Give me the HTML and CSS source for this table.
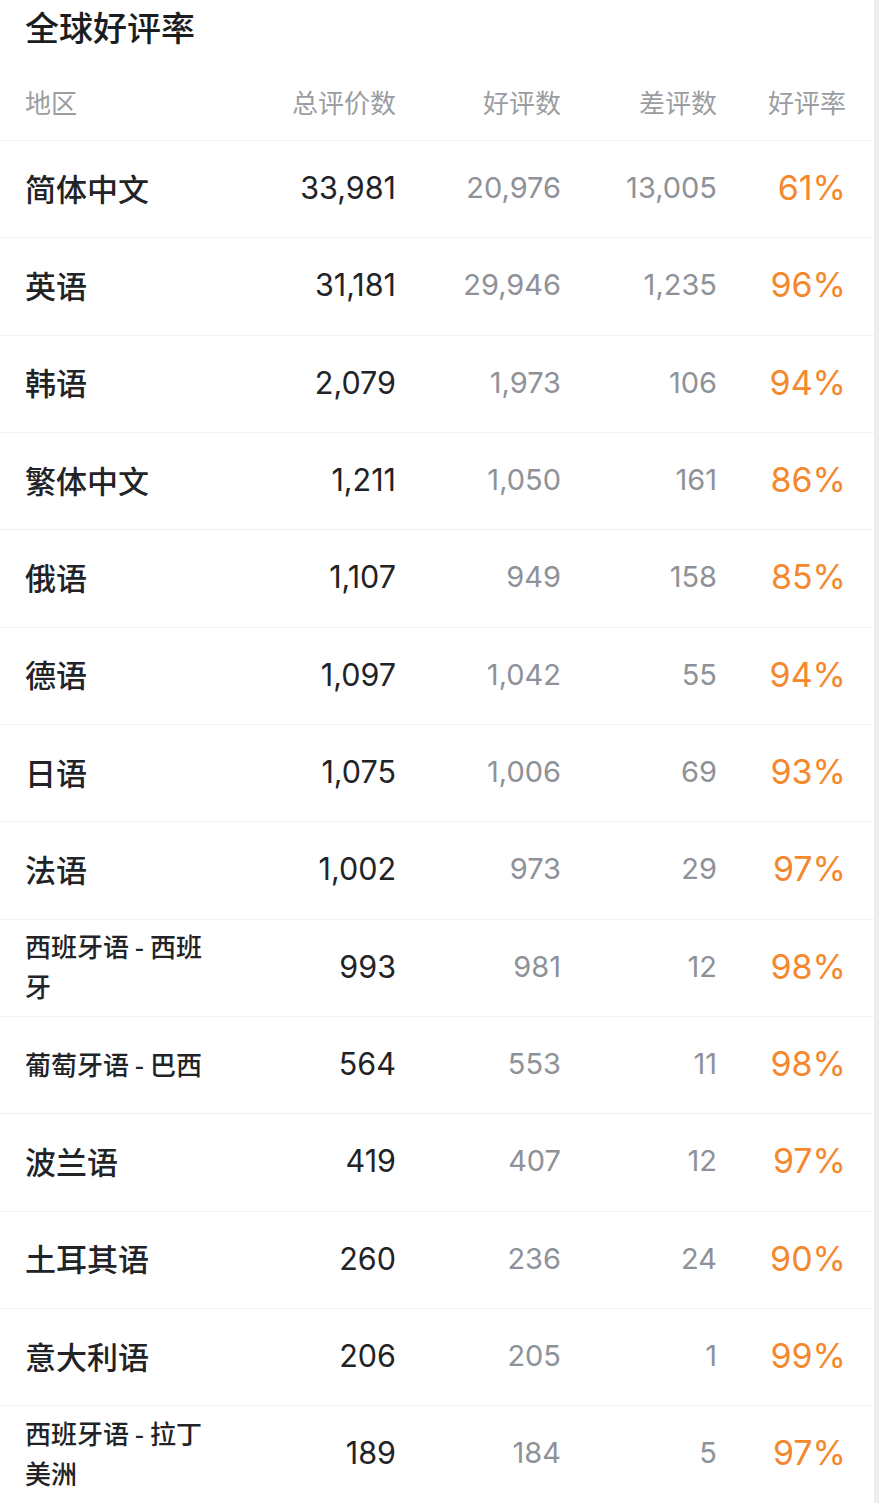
FILE: index.html
```html
<!DOCTYPE html>
<html lang="zh-CN">
<head>
<meta charset="utf-8">
<title>全球好评率</title>
<link rel="stylesheet" href="styles.css">
</head>
<body>
<div class="page">
  <main class="panel">
    <h1 class="title">全球好评率</h1>
    <div class="row head">
      <div class="c-label">地区</div>
      <div class="c-num">总评价数</div>
      <div class="c-num">好评数</div>
      <div class="c-num">差评数</div>
      <div class="c-num">好评率</div>
    </div>
    <div class="row"><div class="c-label">简体中文</div><div class="c-num total">33,981</div><div class="c-num sub">20,976</div><div class="c-num sub">13,005</div><div class="c-num rate">61%</div></div>
    <div class="row"><div class="c-label">英语</div><div class="c-num total">31,181</div><div class="c-num sub">29,946</div><div class="c-num sub">1,235</div><div class="c-num rate">96%</div></div>
    <div class="row"><div class="c-label">韩语</div><div class="c-num total">2,079</div><div class="c-num sub">1,973</div><div class="c-num sub">106</div><div class="c-num rate">94%</div></div>
    <div class="row"><div class="c-label">繁体中文</div><div class="c-num total">1,211</div><div class="c-num sub">1,050</div><div class="c-num sub">161</div><div class="c-num rate">86%</div></div>
    <div class="row"><div class="c-label">俄语</div><div class="c-num total">1,107</div><div class="c-num sub">949</div><div class="c-num sub">158</div><div class="c-num rate">85%</div></div>
    <div class="row"><div class="c-label">德语</div><div class="c-num total">1,097</div><div class="c-num sub">1,042</div><div class="c-num sub">55</div><div class="c-num rate">94%</div></div>
    <div class="row"><div class="c-label">日语</div><div class="c-num total">1,075</div><div class="c-num sub">1,006</div><div class="c-num sub">69</div><div class="c-num rate">93%</div></div>
    <div class="row"><div class="c-label">法语</div><div class="c-num total">1,002</div><div class="c-num sub">973</div><div class="c-num sub">29</div><div class="c-num rate">97%</div></div>
    <div class="row"><div class="c-label small">西班牙语 - 西班牙</div><div class="c-num total">993</div><div class="c-num sub">981</div><div class="c-num sub">12</div><div class="c-num rate">98%</div></div>
    <div class="row"><div class="c-label small">葡萄牙语 - 巴西</div><div class="c-num total">564</div><div class="c-num sub">553</div><div class="c-num sub">11</div><div class="c-num rate">98%</div></div>
    <div class="row"><div class="c-label">波兰语</div><div class="c-num total">419</div><div class="c-num sub">407</div><div class="c-num sub">12</div><div class="c-num rate">97%</div></div>
    <div class="row"><div class="c-label">土耳其语</div><div class="c-num total">260</div><div class="c-num sub">236</div><div class="c-num sub">24</div><div class="c-num rate">90%</div></div>
    <div class="row"><div class="c-label">意大利语</div><div class="c-num total">206</div><div class="c-num sub">205</div><div class="c-num sub">1</div><div class="c-num rate">99%</div></div>
    <div class="row"><div class="c-label small">西班牙语 - 拉丁美洲</div><div class="c-num total">189</div><div class="c-num sub">184</div><div class="c-num sub">5</div><div class="c-num rate">97%</div></div>
  </main>
  <div class="scrollbar"></div>
</div>
</body>
</html>
```
FILE: styles.css
```css
html, body {
  margin: 0;
  padding: 0;
  background: #ffffff;
}
body {
  font-family: "Noto Sans CJK SC", "Noto Sans", sans-serif;
  color: #222326;
  overflow: hidden;
}
.page {
  display: flex;
  width: 879px;
  height: 1503px;
}
.panel {
  width: 874px;
  flex: none;
}
.scrollbar {
  flex: 1;
  background: #eeeeee;
}
.title {
  margin: 0;
  padding-left: 25px;
  height: 56px;
  line-height: 54px;
  font-size: 34px;
  font-weight: 500;
  color: #1c1d20;
}
.row {
  display: grid;
  grid-template-columns: 200px 171px 165px 156px 129px;
  align-items: center;
  padding: 0 28px 3px 25px;
  height: 97.33px;
  box-sizing: border-box;
  border-bottom: 1px solid #f1f1f2;
}
.row.head {
  height: 85px;
  align-items: start;
  padding-top: 29px;
  padding-bottom: 0;
  font-size: 26px;
  line-height: 34px;
  color: #9a9da2;
}
.c-label {
  font-size: 31px;
  font-weight: 500;
  line-height: 40px;
}
.head .c-label { font-size: 26px; font-weight: 400; line-height: 34px; }
.c-label.small {
  font-size: 26px;
  line-height: 40px;
}
.c-num {
  text-align: right;
  font-family: "Inter", "Noto Sans", sans-serif;
  white-space: nowrap;
}
.head .c-num {
  font-family: "Noto Sans CJK SC", sans-serif;
}
.total {
  font-size: 30.5px;
  color: #222326;
}
.sub {
  font-size: 29px;
  color: #8e9298;
}
.rate {
  font-size: 34px;
  color: #f5882d;
}
```
